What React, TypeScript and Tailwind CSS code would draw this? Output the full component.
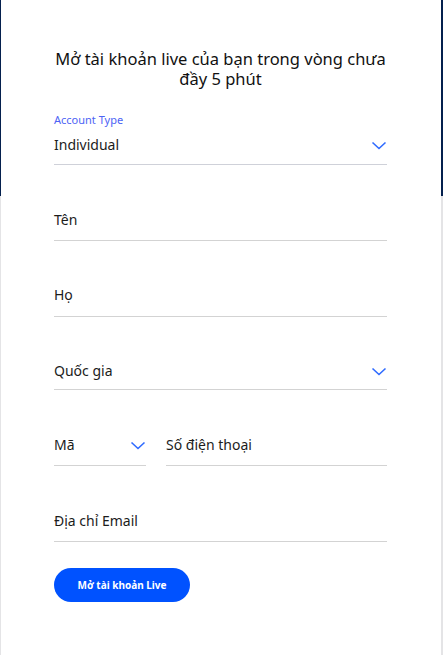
import React from "react";

const Chevron = () => (
  <svg width="16" height="9" viewBox="0 0 16 9" fill="none" className="shrink-0">
    <path d="M1.5 1.5 L8 7.5 L14.5 1.5" stroke="#2f6bff" strokeWidth="1.6" />
  </svg>
);

export default function App() {
  return (
    <div
      className="w-[443px] h-[655px] bg-[linear-gradient(to_bottom,#04204e_196px,#e4e4e6_196px)] pl-[1px] pr-[2px]"
      style={{ fontFamily: '"Noto Sans", "Open Sans", sans-serif' }}
    >
      <div className="h-full bg-white pl-[53px] pr-[54px] pt-[49px] text-[#1c1c1c]">
        <h1 className="-mx-[6px] text-center text-[16.5px] leading-[20px] font-normal text-[#111]">
          Mở tài khoản live của bạn trong vòng chưa đầy 5 phút
        </h1>

        <div className="mt-[24px] border-b border-[#cfd1d9] pb-[9px]">
          <div className="text-[11px] leading-[14px] text-[#4d63f5]">Account Type</div>
          <div className="mt-[8px] flex items-center justify-between h-[20px]">
            <div className="text-[14px] leading-[20px]">Individual</div>
            <Chevron />
          </div>
        </div>

        <div className="mt-[45px] border-b border-[#d3d3d3] pb-[10px]">
          <div className="text-[14px] leading-[20px]">Tên</div>
        </div>

        <div className="mt-[44px] border-b border-[#d3d3d3] pb-[11px]">
          <div className="text-[14px] leading-[20px]">Họ</div>
        </div>

        <div className="mt-[44px] border-b border-[#d3d3d3] pb-[8px] flex items-center justify-between">
          <div className="text-[14px] leading-[20px]">Quốc gia</div>
          <Chevron />
        </div>

        <div className="mt-[45px] flex gap-[20px]">
          <div className="w-[92px] border-b border-[#d3d3d3] pb-[10px] flex items-center justify-between">
            <div className="text-[14px] leading-[20px]">Mã</div>
            <Chevron />
          </div>
          <div className="flex-1 border-b border-[#d3d3d3] pb-[10px]">
            <div className="text-[14px] leading-[20px]">Số điện thoại</div>
          </div>
        </div>

        <div className="mt-[45px] border-b border-[#d3d3d3] pb-[10px]">
          <div className="text-[14px] leading-[20px]">Địa chỉ Email</div>
        </div>

        <button className="block mt-[26px] h-[34px] w-[136px] rounded-full bg-[#0052ff] text-white text-[10px] leading-[14px] font-bold">
          Mở tài khoản Live
        </button>
      </div>
    </div>
  );
}
